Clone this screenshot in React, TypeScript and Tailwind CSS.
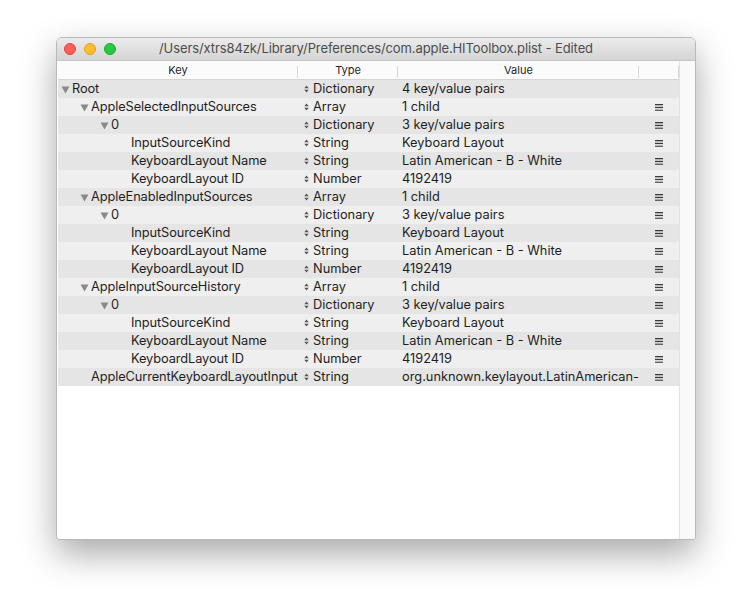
import React from "react";

type Row = {
  key: string;
  level: number;
  open?: boolean;
  type: string;
  value: string;
  menu?: boolean;
};

const rows: Row[] = [
  { key: "Root", level: 0, open: true, type: "Dictionary", value: "4 key/value pairs" },
  { key: "AppleSelectedInputSources", level: 1, open: true, type: "Array", value: "1 child", menu: true },
  { key: "0", level: 2, open: true, type: "Dictionary", value: "3 key/value pairs", menu: true },
  { key: "InputSourceKind", level: 3, type: "String", value: "Keyboard Layout", menu: true },
  { key: "KeyboardLayout Name", level: 3, type: "String", value: "Latin American - B - White", menu: true },
  { key: "KeyboardLayout ID", level: 3, type: "Number", value: "4192419", menu: true },
  { key: "AppleEnabledInputSources", level: 1, open: true, type: "Array", value: "1 child", menu: true },
  { key: "0", level: 2, open: true, type: "Dictionary", value: "3 key/value pairs", menu: true },
  { key: "InputSourceKind", level: 3, type: "String", value: "Keyboard Layout", menu: true },
  { key: "KeyboardLayout Name", level: 3, type: "String", value: "Latin American - B - White", menu: true },
  { key: "KeyboardLayout ID", level: 3, type: "Number", value: "4192419", menu: true },
  { key: "AppleInputSourceHistory", level: 1, open: true, type: "Array", value: "1 child", menu: true },
  { key: "0", level: 2, open: true, type: "Dictionary", value: "3 key/value pairs", menu: true },
  { key: "InputSourceKind", level: 3, type: "String", value: "Keyboard Layout", menu: true },
  { key: "KeyboardLayout Name", level: 3, type: "String", value: "Latin American - B - White", menu: true },
  { key: "KeyboardLayout ID", level: 3, type: "Number", value: "4192419", menu: true },
  // shown truncated, as in the editor
  { key: "AppleCurrentKeyboardLayoutInput", level: 1, type: "String", value: "org.unknown.keylayout.LatinAmerican-", menu: true },
];

const indents = ["pl-[14px]", "pl-[33px]", "pl-[53px]", "pl-[73px]"];

function Disclosure() {
  return (
    <svg width="9" height="8" viewBox="0 0 9 8" className="absolute left-[-11px] top-[5px]">
      <path d="M0.5 0.5 H8.5 L4.5 7.5 Z" fill="#8a8a8a" />
    </svg>
  );
}

function Stepper() {
  return (
    <svg width="5" height="8" viewBox="0 0 5 8" className="shrink-0">
      <path d="M0.3 3.3 L2.5 0.5 L4.7 3.3 Z" fill="#555" />
      <path d="M0.3 4.7 L2.5 7.5 L4.7 4.7 Z" fill="#555" />
    </svg>
  );
}

function MenuIcon() {
  return (
    <svg width="8" height="7" viewBox="0 0 8 7">
      <rect x="0" y="0" width="8" height="1.3" fill="#3a3a3a" />
      <rect x="0" y="2.8" width="8" height="1.3" fill="#3a3a3a" />
      <rect x="0" y="5.6" width="8" height="1.3" fill="#555" />
    </svg>
  );
}

function HeaderCell({ label, className }: { label: string; className: string }) {
  return (
    <div className={`relative flex items-center justify-center ${className}`}>
      <span>{label}</span>
      <span className="absolute right-0 top-[4px] h-[12px] w-px bg-[#d6d6d6]" />
    </div>
  );
}

export default function App() {
  return (
    <div className="flex h-[614px] w-[752px] justify-center bg-white pt-[37px] font-['Inter','Noto_Sans',sans-serif] text-[#1e1e1e] antialiased">
      <div className="flex h-[503px] w-[640px] flex-col overflow-hidden rounded-t-[6px] rounded-b-[3px] border border-[#b9b9b9] bg-white shadow-[0_14px_34px_rgba(0,0,0,0.34)]">
        {/* title bar */}
        <div className="relative flex h-[23px] shrink-0 items-center justify-center border-b border-[#c6c6c6] bg-gradient-to-b from-[#ebebeb] to-[#d5d5d5]">
          <div className="absolute left-[7px] top-[5px] flex gap-[8px]">
            <span className="h-[12px] w-[12px] rounded-full border border-[#e0443e] bg-[#fe5f57]" />
            <span className="h-[12px] w-[12px] rounded-full border border-[#dea123] bg-[#febc2e]" />
            <span className="h-[12px] w-[12px] rounded-full border border-[#1aab29] bg-[#28c840]" />
          </div>
          <span className="text-[13px] tracking-[-0.1px] text-[#4d4d4d]">
            /Users/xtrs84zk/Library/Preferences/com.apple.HIToolbox.plist - Edited
          </span>
        </div>

        <div className="flex flex-1 pl-px">
          <div className="flex w-[621px] flex-col">
            {/* header */}
            <div className="flex h-[19px] shrink-0 border-b border-[#d4d4d4] bg-[#fbfbfb] pt-px text-[11px] text-[#262626]">
              <HeaderCell label="Key" className="w-[240px]" />
              <HeaderCell label="Type" className="w-[100px]" />
              <HeaderCell label="Value" className="w-[241px]" />
              <HeaderCell label="" className="w-[40px]" />
            </div>
            {/* rows */}
            {rows.map((r, i) => (
              <div
                key={i}
                className={`flex h-[18px] items-center text-[12.8px] leading-[18px] ${i % 2 === 0 ? "bg-[#e5e5e5]" : "bg-[#efefef]"}`}
              >
                <div className={`w-[240px] shrink-0 whitespace-nowrap ${indents[r.level]}`}>
                  <span className="relative tracking-[-0.1px]">
                    {r.open && <Disclosure />}
                    {r.key}
                  </span>
                </div>
                <div className="flex w-[100px] shrink-0 items-center gap-[4px] overflow-hidden whitespace-nowrap pl-[6px]">
                  <Stepper />
                  <span>{r.type}</span>
                </div>
                <div className="w-[241px] shrink-0 overflow-hidden whitespace-nowrap pl-[4px]">{r.value}</div>
                <div className="flex w-[40px] shrink-0 justify-center">{r.menu && <MenuIcon />}</div>
              </div>
            ))}
          </div>
          {/* right scroller strip */}
          <div className="w-[16px] border-l border-[#e2e2e2] bg-[#f9f9f9]" />
        </div>
      </div>
    </div>
  );
}
